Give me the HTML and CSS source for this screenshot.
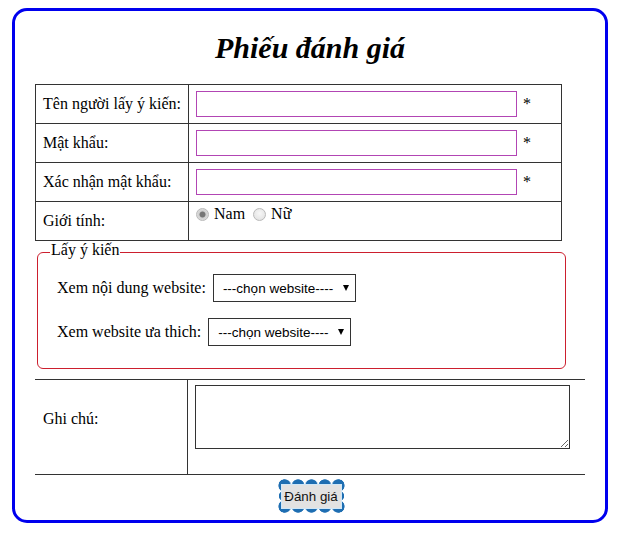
FILE: index.html
```html
<!DOCTYPE html>
<html lang="vi">
<head>
<meta charset="utf-8">
<title>Phiếu đánh giá</title>
<link rel="stylesheet" href="styles.css">
</head>
<body>
<div class="card">
  <h1 class="title">Phiếu đánh giá</h1>
  <div class="info">
    <div class="cell lbl">Tên người lấy ý kiến:</div>
    <div class="cell fld"><input class="txt" type="text"><span class="req">*</span></div>
    <div class="cell lbl">Mật khẩu:</div>
    <div class="cell fld"><input class="txt" type="password"><span class="req">*</span></div>
    <div class="cell lbl">Xác nhận mật khẩu:</div>
    <div class="cell fld"><input class="txt" type="password"><span class="req">*</span></div>
    <div class="cell lbl">Giới tính:</div>
    <div class="cell fld top">
      <label class="opt"><input class="radio" type="radio" name="gt" checked>Nam</label>
      <label class="opt"><input class="radio" type="radio" name="gt">Nữ</label>
    </div>
  </div>
  <fieldset class="opinion">
    <legend class="legend">Lấy ý kiến</legend>
    <div class="pick">
      <span class="pick-lbl">Xem nội dung website:</span>
      <span class="sel"><select class="select"><option>---chọn website----</option></select></span>
    </div>
    <div class="pick">
      <span class="pick-lbl">Xem website ưa thich:</span>
      <span class="sel"><select class="select"><option>---chọn website----</option></select></span>
    </div>
  </fieldset>
  <div class="notes">
    <div class="notes-lbl">Ghi chú:</div>
    <div class="notes-fld"><textarea class="area"></textarea></div>
  </div>
  <div class="actions"><button class="submit" type="button">Đánh giá</button></div>
</div>
</body>
</html>
```
FILE: styles.css
```css
* { box-sizing: border-box; }

body {
  margin: 0;
  font-family: "Liberation Serif", "Times New Roman", serif;
  font-size: 16px;
  color: #000;
  background: #fff;
}

.card {
  margin: 8px 0 0 12px;
  width: 596px;
  height: 515px;
  padding: 0 20px;
  border: 3px solid #0000ee;
  border-radius: 15px;
}

.title {
  margin: 0;
  padding-top: 18px;
  font-size: 30px;
  line-height: 37px;
  font-style: italic;
  font-weight: bold;
  text-align: center;
}

.info {
  margin-top: 18px;
  width: 527px;
  display: grid;
  grid-template-columns: 153px 373px;
  border-left: 1px solid #333;
  border-top: 1px solid #333;
}

.cell {
  height: 39px;
  border-right: 1px solid #333;
  border-bottom: 1px solid #333;
  display: flex;
  align-items: center;
  padding-left: 7px;
}

.cell.top {
  align-items: flex-start;
  padding-top: 3px;
}

.txt {
  width: 321px;
  height: 26px;
  margin: 0 0 1px 0;
  padding: 1px 2px;
  border: 1px solid #b245b4;
  outline: none;
  font-size: 13px;
}

.req {
  margin-left: 6px;
  line-height: 18px;
}

.opt {
  display: flex;
  align-items: center;
  margin-right: 8px;
  line-height: 18px;
}

.radio {
  appearance: none;
  -webkit-appearance: none;
  width: 13px;
  height: 13px;
  margin: 0 5px 0 0;
  border: 1px solid #b9b9b9;
  border-radius: 50%;
  background: radial-gradient(circle at 50% 40%, #f7f7f7 0, #dedede 100%);
}

.radio:checked {
  background: radial-gradient(circle, #777 0, #777 2.6px, #cfcfcf 3.4px, #e9e9e9 100%);
}

.opinion {
  margin: 0 0 0 2px;
  width: 529px;
  padding: 10px 12px 22px 12px;
  border: 1px solid #cc1f2e;
  border-radius: 6px;
}

.legend {
  padding: 0 1px 5px 1px;
  line-height: 18.4px;
}

.pick {
  height: 28px;
  margin-left: 7px;
  display: flex;
  align-items: center;
  gap: 7px;
}

.pick + .pick {
  margin-top: 16px;
}

.sel {
  position: relative;
  display: block;
}

.sel::after {
  content: "";
  position: absolute;
  right: 7px;
  top: 11px;
  border-left: 3.5px solid transparent;
  border-right: 3.5px solid transparent;
  border-top: 6px solid #000;
  pointer-events: none;
}

.select {
  appearance: none;
  -webkit-appearance: none;
  display: block;
  width: 143px;
  height: 28px;
  margin: 0;
  padding: 0 20px 0 9px;
  border: 1px solid #333;
  border-radius: 0;
  background: #fff;
  color: #000;
  font-family: "Liberation Sans", Arial, sans-serif;
  font-size: 13.5px;
}

.notes {
  margin-top: 10px;
  height: 96px;
  display: grid;
  grid-template-columns: 153px 1fr;
  border-top: 1px solid #333;
  border-bottom: 1px solid #333;
}

.notes-lbl {
  border-right: 1px solid #333;
  padding: 30px 0 0 8px;
  line-height: 18.4px;
}

.area {
  display: block;
  margin: 5px 0 0 7px;
  width: 375px;
  height: 64px;
  border: 1px solid #333;
  border-radius: 0;
  padding: 2px;
}

.actions {
  padding-top: 4px;
  display: flex;
  justify-content: center;
}

.submit {
  width: 67px;
  height: 34px;
  margin-left: 2px;
  padding: 0;
  border: none;
  color: #111;
  font-family: "Liberation Sans", Arial, sans-serif;
  font-size: 13.33px;
  background:
    linear-gradient(#e2e2e2, #e2e2e2) center / calc(100% - 8px) calc(100% - 11px) no-repeat,
    linear-gradient(#cfe7f8, #cfe7f8) center / calc(100% - 6px) calc(100% - 9px) no-repeat,
    radial-gradient(circle 6.6px at 50% 6.6px, #1e6eb2 90%, transparent 100%) left top / 13.4px 14px round no-repeat,
    radial-gradient(circle 6.6px at 50% 7.4px, #1e6eb2 90%, transparent 100%) left bottom / 13.4px 14px round no-repeat,
    radial-gradient(circle 5.4px at 6px 50%, #1e6eb2 90%, transparent 100%) left top / 12px 11.33px no-repeat round,
    radial-gradient(circle 5.4px at 6px 50%, #1e6eb2 90%, transparent 100%) right top / 12px 11.33px no-repeat round;
}
```
